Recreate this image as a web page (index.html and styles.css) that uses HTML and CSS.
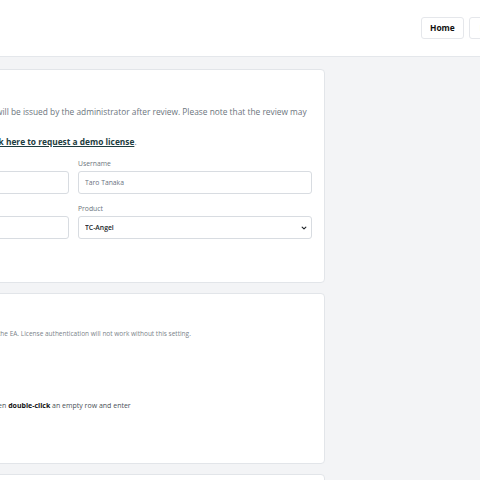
FILE: index.html
```html
<!DOCTYPE html>
<html lang="en">
  <head>
    <meta charset="UTF-8" />
    <meta name="viewport" content="width=device-width, initial-scale=1.0" />
    <title>License Request</title>
    <link rel="stylesheet" href="styles.css">
  </head>
  <body>
    <div class="page">
      <header class="topbar">
        <div class="topbar-inner">
          <a class="brand" href="#">TC License Portal</a>
          <nav class="nav">
            <a class="nav-btn" href="#">Home</a>
            <a class="nav-btn" href="#">My Licenses</a>
            <a class="nav-btn" href="#">Logout</a>
          </nav>
        </div>
      </header>

      <main class="content">
        <section class="card">
          <h2 class="card-title">License Request</h2>
          <p class="lead">
            Please fill in the form below. Your license will be issued by the administrator after review. Please note that the review may
          </p>
          <p class="lead">take some time.</p>
          <p class="lead">
            To try a product before buying, please <a class="demo-link" href="#">click here to request a demo license</a>.
          </p>

          <form class="form-grid">
            <div class="field">
              <label class="label" for="account">Account Number</label>
              <input class="input" id="account" type="text">
            </div>
            <div class="field">
              <label class="label" for="username">Username</label>
              <input class="input" id="username" type="text" placeholder="Taro Tanaka">
            </div>
            <div class="field">
              <label class="label" for="email">Email</label>
              <input class="input" id="email" type="text">
            </div>
            <div class="field">
              <label class="label" for="product">Product</label>
              <div class="select-wrap">
                <select class="input select" id="product">
                  <option>TC-Angel</option>
                </select>
                <svg class="chevron" width="6" height="6" viewBox="0 0 16 16">
                  <path d="M3 5.5l5 5 5-5" fill="none" stroke="#212529" stroke-width="3" stroke-linecap="round" stroke-linejoin="round"/>
                </svg>
              </div>
            </div>
            <div class="actions">
              <button class="btn" type="button">Send</button>
            </div>
          </form>
        </section>

        <section class="card card-setup">
          <h2 class="card-title">Setup</h2>
          <p class="small">Please set your MT4 account number in the setting of the EA. License authentication will not work without this setting.</p>
          <h3 class="sub">WebRequest</h3>
          <ol class="steps">
            <li>Open MT4.</li>
            <li>Tools &gt; Options.</li>
          </ol>
          <p class="step-text">Open the Expert Advisor tab in the Options and then <b>double-click</b> an empty row and enter
            <br>the URL.</p>
        </section>

        <section class="card">
          <h2 class="card-title">My Licenses</h2>
        </section>
      </main>
    </div>
  </body>
</html>
```

FILE: styles.css
```css
body {
  margin: 0;
  background-color: #f3f4f6;
  font-family: "Open Sans", "DejaVu Sans", sans-serif;
  color: #212529;
  overflow: hidden;
}

.page {
  margin-left: -190px;
  width: 1100px;
}

.topbar {
  background-color: #fff;
  border-bottom: 1px solid #e4e7eb;
}

.topbar-inner {
  display: flex;
  align-items: center;
  padding: 17px 12px;
}

.brand {
  width: 599px;
  font-size: 12px;
  font-weight: 700;
  color: #212529;
  text-decoration: none;
}

.nav {
  display: flex;
  gap: 5px;
}

.nav-btn {
  display: block;
  height: 20px;
  line-height: 20px;
  padding: 0 8px;
  border: 1px solid #e5e7eb;
  border-radius: 3px;
  font-size: 8.4px;
  font-weight: 700;
  color: #111;
  text-decoration: none;
  background: #fff;
}

.nav-btn + .nav-btn {
  padding-left: 10px;
}

.content {
  padding: 12px 12px;
  display: flex;
  flex-direction: column;
  gap: 10px;
}

.card {
  width: 477px;
  background: #fff;
  border: 1px solid #e2e5e9;
  border-radius: 4px;
  padding: 13px 12px;
}

.card-title {
  margin: 0 0 5px;
  font-size: 12px;
  line-height: 16px;
  font-weight: 700;
}

.lead {
  margin: 0;
  font-size: 8.35px;
  line-height: 15px;
  color: #6c757d;
}

.demo-link {
  color: #1d3c40;
  font-weight: 700;
  text-underline-offset: 1px;
}

.form-grid {
  display: grid;
  grid-template-columns: 1fr 1fr;
  column-gap: 9px;
  row-gap: 9px;
  margin-top: 9px;
}

.field {
  display: flex;
  flex-direction: column;
}

.label {
  font-size: 6.8px;
  line-height: 12px;
  color: #6c757d;
  margin-bottom: 1px;
}

.input {
  display: block;
  box-sizing: border-box;
  height: 23px;
  width: 100%;
  border: 1px solid #d8dce1;
  border-radius: 3px;
  padding: 0 6px;
  font-family: inherit;
  font-size: 6.8px;
  color: #212529;
  background: #fff;
}

.input::placeholder {
  color: #6b7280;
}

.select-wrap {
  position: relative;
}

.select {
  appearance: none;
  font-weight: 600;
}

.chevron {
  position: absolute;
  right: 5px;
  top: 9px;
}

.actions {
  grid-column: 1 / 2;
}

.btn {
  display: block;
  height: 21px;
  padding: 0 12px;
  border: 0;
  border-radius: 3px;
  background: #1d3c40;
  color: #fff;
  font-size: 8px;
  font-weight: 700;
}

.card-setup {
  height: 143px;
}

.small {
  margin: 0;
  font-size: 6.5px;
  line-height: 12px;
  color: #7b838a;
}

.sub {
  margin: 14px 0 2px;
  font-size: 9px;
  line-height: 12px;
}

.steps {
  margin: 0;
  padding-left: 14px;
  font-size: 7px;
  line-height: 12px;
  color: #495057;
}

.step-text {
  margin: 8px 0 0;
  font-size: 7px;
  line-height: 12px;
  color: #495057;
}

.step-text b {
  color: #111;
}
```
